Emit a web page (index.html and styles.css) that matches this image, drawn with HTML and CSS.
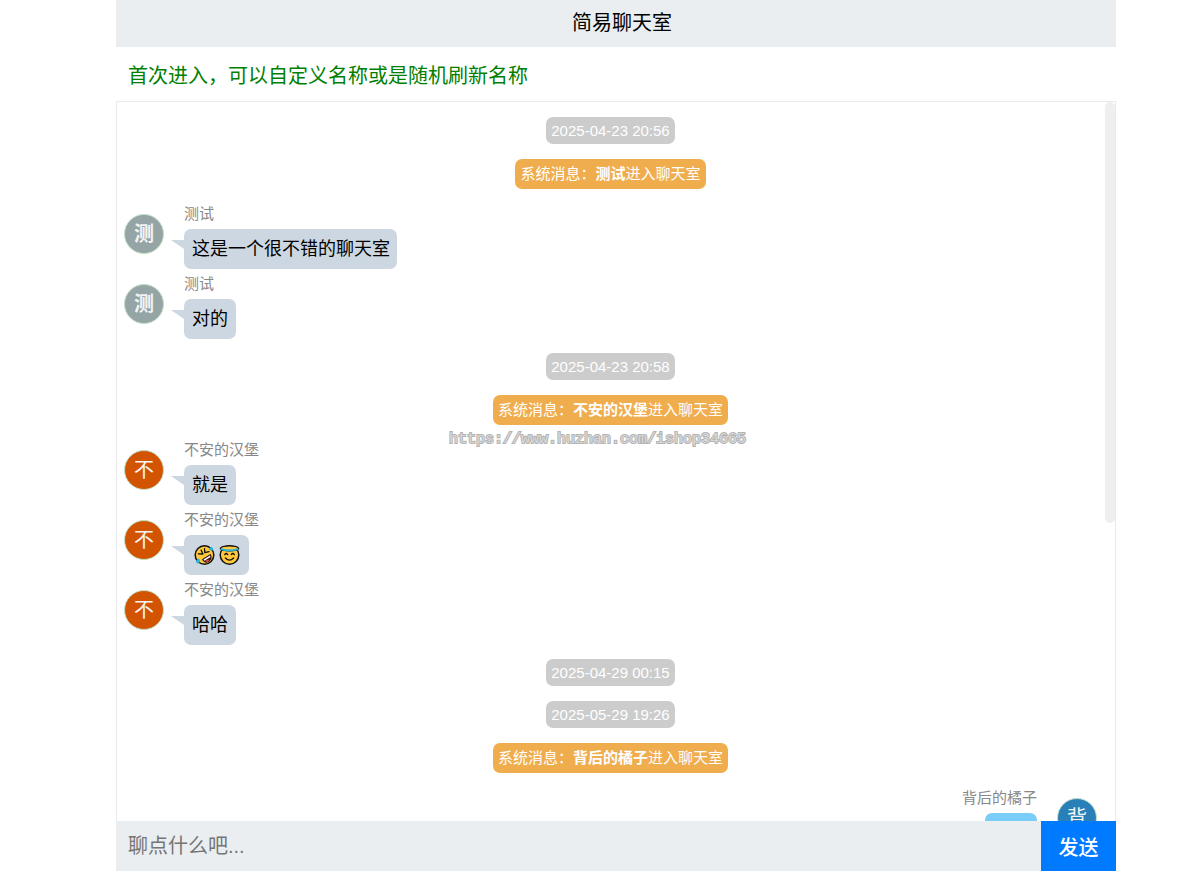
FILE: index.html
```html
<!DOCTYPE html>
<html lang="zh-CN">
<head>
<meta charset="utf-8">
<title>简易聊天室</title>
<meta name="viewport" content="width=device-width, initial-scale=1">
<link rel="stylesheet" href="styles.css">
</head>
<body>
<div class="app">
  <header class="header"><h1 class="title">简易聊天室</h1></header>
  <p class="notice">首次进入，可以自定义名称或是随机刷新名称</p>
  <main class="chat">
    <div class="thread">
      <time class="pill time">2025-04-23 20:56</time>
      <p class="pill system">系统消息：<strong>测试</strong>进入聊天室</p>
      <div class="group">
        <article class="message">
          <span class="avatar gray">测</span>
          <div class="body"><span class="name">测试</span><p class="bubble">这是一个很不错的聊天室</p></div>
        </article>
        <article class="message">
          <span class="avatar gray">测</span>
          <div class="body"><span class="name">测试</span><p class="bubble">对的</p></div>
        </article>
      </div>
      <time class="pill time">2025-04-23 20:58</time>
      <p class="pill system">系统消息：<strong>不安的汉堡</strong>进入聊天室</p>
      <div class="group">
        <article class="message">
          <span class="avatar orange">不</span>
          <div class="body"><span class="name">不安的汉堡</span><p class="bubble">就是</p></div>
        </article>
        <article class="message">
          <span class="avatar orange">不</span>
          <div class="body"><span class="name">不安的汉堡</span><p class="bubble">
            <svg class="emoji" viewBox="0 0 24 24" role="img" aria-label="笑得打滚">
              <circle cx="12" cy="12" r="9.3" fill="#ffc83d" stroke="#111" stroke-width="1.5"/>
              <path d="M5.8 10.8l4.6.2-1.8-3.9M12 5.6l.3 4 4.2-.9" fill="none" stroke="#111" stroke-width="1.3" stroke-linejoin="round" stroke-linecap="round"/>
              <path d="M10 16.5l8-5c1.3 3.1.2 6-2.2 7.2-2.4 1.1-4.6.2-5.8-2.2z" fill="#5a1515" stroke="#111"/>
              <path d="M11 16.4l6.6-4 .3 1.7-6 3.6z" fill="#fff"/>
              <path d="M13 18.5c.5-1.6 2.5-2.5 3.8-1.3-.8 1.4-2.3 2.1-3.8 1.3z" fill="#e44b55"/>
              <path d="M6.8 15.8c.9 1.6 1 3.6-.4 4.4-1.4.7-2.9-.4-2.8-1.9.1-1.2 1.6-2.2 3.2-2.5zM16.6 6.6c.1-2 1.6-3 3-2.4 1.4.7 1.5 2.7.1 3.4-1 .4-2.3-.2-3.1-1z" fill="#26b5dc"/>
            </svg><svg class="emoji" viewBox="0 0 24 24" role="img" aria-label="天使笑脸">
              <circle cx="12" cy="12" r="9.3" fill="#ffc83d" stroke="#111" stroke-width="1.5"/>
              <path d="M2.8 5.6C4 2 20 2 21.2 5.6 20 8.6 4 8.6 2.8 5.6z" fill="#ffc83d" stroke="#111" stroke-width="1.4"/>
              <path d="M3.4 5.4C6 7.8 18 7.8 20.6 5.4" fill="none" stroke="#26b5dc" stroke-width="2"/>
              <path d="M7.2 11.6q1.5-2.2 3 0M13.8 11.6q1.5-2.2 3 0M7.9 15q4.1 4.2 8.2 0" fill="none" stroke="#111" stroke-width="1.3" stroke-linecap="round"/>
            </svg></p></div>
        </article>
        <article class="message">
          <span class="avatar orange">不</span>
          <div class="body"><span class="name">不安的汉堡</span><p class="bubble">哈哈</p></div>
        </article>
      </div>
      <time class="pill time">2025-04-29 00:15</time>
      <time class="pill time">2025-05-29 19:26</time>
      <p class="pill system">系统消息：<strong>背后的橘子</strong>进入聊天室</p>
      <div class="group">
        <article class="message mine">
          <span class="avatar blue">背</span>
          <div class="body"><span class="name">背后的橘子</span><p class="bubble"></p></div>
        </article>
      </div>
    </div>
    <div class="scrollbar" aria-hidden="true"><div class="thumb"></div></div>
  </main>
  <form class="composer">
    <input class="entry" type="text" placeholder="聊点什么吧..." aria-label="聊点什么吧">
    <button class="send" type="button">发送</button>
  </form>
  <div class="watermark">https://www.huzhan.com/ishop34665</div>
</div>
</body>
</html>
```

FILE: styles.css
```css
* { box-sizing: border-box; }

body {
  margin: 0;
  padding: 0 79px 6px 116px;
  height: 100vh;
  background: #fff;
  color: #000;
  font-family: "Liberation Sans", "Noto Sans CJK SC", sans-serif;
}

p, h1 { margin: 0; }

.app {
  position: relative;
  display: flex;
  flex-direction: column;
  max-width: 1000px;
  height: 100%;
  margin: 0 auto;
}

.header {
  padding: 8px 0 9px 12px;
  background: #eaeef1;
  text-align: center;
}

.title {
  font-size: 20px;
  font-weight: 400;
  line-height: 30px;
}

.notice {
  padding: 14px 12px 10px;
  color: #008000;
  font-size: 20px;
  line-height: 30px;
}

.chat {
  display: flex;
  flex: 1;
  min-height: 0;
  overflow: hidden;
  border: 1px solid #eaeaec;
  border-bottom: 0;
}

.thread {
  display: flex;
  flex: 1;
  flex-direction: column;
  align-items: center;
  gap: 15px;
  padding: 15px 8px 0 7px;
}

.pill {
  flex: none;
  padding: 0 5px;
  border-radius: 7px;
  color: #fff;
  font-size: 15px;
}

.time {
  background: #ccc;
  line-height: 27px;
}

.system {
  background: #f0ad4e;
  line-height: 30px;
}

.group {
  display: flex;
  flex: none;
  flex-direction: column;
  align-self: stretch;
  gap: 5px;
  margin-bottom: -1px;
}

.message {
  display: flex;
  align-items: flex-start;
  gap: 20px;
}

.avatar {
  flex: none;
  width: 40px;
  height: 40px;
  margin-top: 10px;
  border: 1px solid #c3dfc8;
  border-radius: 50%;
  color: #f4f4f4;
  font-size: 20px;
  line-height: 38px;
  text-align: center;
}

.gray { background: #95a5a6; font-weight: 700; }
.orange { background: #d35400; }
.blue { background: #2980b9; }

.body {
  display: flex;
  flex-direction: column;
  align-items: flex-start;
  gap: 5px;
}

.name {
  color: #888;
  font-size: 15px;
  line-height: 20px;
}

.bubble {
  position: relative;
  display: flex;
  align-items: center;
  min-width: 52px;
  min-height: 40px;
  padding: 0 7px 0 8px;
  border-radius: 7px;
  background: #cdd7e2;
  font-size: 18px;
  line-height: 40px;
}

.bubble::before {
  content: "";
  position: absolute;
  top: 11px;
  right: 100%;
  width: 13px;
  height: 9px;
  background: inherit;
  clip-path: polygon(0 0, 100% 0, 100% 100%);
}

.mine { flex-direction: row-reverse; }
.mine .body { align-items: flex-end; }
.mine .bubble { background: #7acdf9; }

.mine .bubble::before {
  right: auto;
  left: 100%;
  clip-path: polygon(0 0, 100% 0, 0 100%);
}

.emoji {
  flex: none;
  width: 25px;
  height: 24px;
}

.scrollbar {
  flex: none;
  width: 10px;
}

.thumb {
  height: 421px;
  border-radius: 5px;
  background: #efefef;
}

.composer {
  display: flex;
  flex: none;
  height: 50px;
}

.entry,
.send {
  border: 0;
  border-radius: 0;
  font-family: inherit;
  font-size: 20px;
}

.entry {
  flex: 1;
  min-width: 0;
  padding: 0 12px;
  background: #eaeef1;
  color: #000;
}

.entry::placeholder { color: #757575; }

.send {
  width: 75px;
  padding: 0;
  background: #007bff;
  color: #fff;
  font-weight: 500;
}

.watermark {
  position: absolute;
  top: 430px;
  left: 333px;
  color: #d8d8d8;
  font-family: "Liberation Mono", monospace;
  font-size: 15px;
  line-height: 20px;
  -webkit-text-stroke: 2px #b4b4b4;
  paint-order: stroke fill;
  pointer-events: none;
}
```
